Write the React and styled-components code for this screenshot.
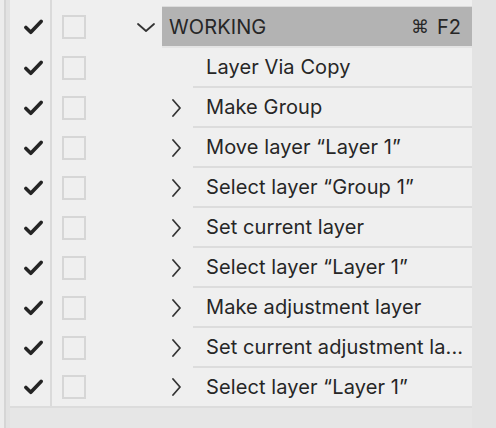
import React from "react";
import styled, { createGlobalStyle } from "styled-components";

const Global = createGlobalStyle`
  html, body { margin: 0; padding: 0; background: #ececec; }
  body { font-family: Inter, "Noto Sans", "DejaVu Sans", sans-serif; }
`;

const Frame = styled.div`
  display: flex;
  width: 496px;
  height: 428px;
  overflow: hidden;
  background: #ececec;
`;

const Rail = styled.div`
  width: 4px;
  margin-left: 4px;
  border-left: 2px solid #d5d5d5;
  background: #e2e2e2;
  flex: none;
`;

const Main = styled.div`
  flex: 1;
  min-width: 0;
  display: flex;
  flex-direction: column;
  background: #efefef;
`;

const Side = styled.div`
  width: 24px;
  flex: none;
  background: #e3e3e3;
`;

const List = styled.div`
  display: flex;
  flex-direction: column;
`;

const Row = styled.div`
  display: flex;
  height: ${(p) => p.$h}px;
  min-width: 0;
`;

const CheckCell = styled.div`
  width: 42px;
  box-sizing: border-box;
  border-right: 2px solid #dadada;
  display: flex;
  align-items: center;
  justify-content: center;
  padding-left: 6px;
  flex: none;
`;

const BoxCell = styled.div`
  width: 34px;
  padding-left: 10px;
  box-sizing: border-box;
  display: flex;
  align-items: center;
  flex: none;
`;

const Box = styled.div`
  width: 24px;
  height: 24px;
  box-sizing: border-box;
  border: 2px solid #d6d6d6;
`;

const ChevCell = styled.div`
  width: ${(p) => p.$w}px;
  flex: none;
  display: flex;
  align-items: center;
  justify-content: flex-end;
  padding-right: ${(p) => p.$pr}px;
  box-sizing: border-box;
`;

const Label = styled.div`
  flex: 1;
  min-width: 0;
  display: flex;
  align-items: center;
  box-sizing: border-box;
  font-size: 20px;
  color: #262626;
  white-space: nowrap;
  padding-left: ${(p) => (p.$header ? 7 : 13)}px;
  padding-right: ${(p) => (p.$header ? 11 : 4)}px;
  background: ${(p) => (p.$header ? "#b3b3b3" : "transparent")};
  border-top: ${(p) => (p.$header ? "1px solid #dcdcdc" : "none")};
  border-bottom: ${(p) =>
    p.$last ? "none" : p.$header ? "2px solid #e4e4e4" : "2px solid #dcdcdc"};
`;

const Text = styled.span`
  flex: 1;
  min-width: 0;
  overflow: hidden;
  letter-spacing: 0.1px;
`;

const Shortcut = styled.span`
  font-size: 20px;
  color: #262626;
  display: flex;
  align-items: center;
  gap: 8px;
`;

const Cmd = styled.span`
  font-family: "DejaVu Sans", sans-serif;
  font-size: 18px;
`;

const Footer = styled.div`
  flex: 1;
  background: #e6e6e6;
  border-top: 2px solid #dcdcdc;
`;

const Spacer = styled.div`
  display: flex;
  height: 6px;
`;

const Check = () => (
  <svg width="19" height="16" viewBox="0 0 19 16">
    <polyline
      points="1.9,8.4 6.8,13.3 17.1,2.4"
      fill="none"
      stroke="#242424"
      strokeWidth="3.6"
      strokeLinecap="round"
      strokeLinejoin="round"
    />
  </svg>
);

const ChevronDown = () => (
  <svg width="18" height="9" viewBox="0 0 18 9">
    <polyline
      points="1,1 9,8 17,1"
      fill="none"
      stroke="#333"
      strokeWidth="1.8"
      strokeLinecap="round"
      strokeLinejoin="round"
    />
  </svg>
);

const ChevronRight = () => (
  <svg width="9" height="18" viewBox="0 0 9 18">
    <polyline
      points="1,1 8,9 1,17"
      fill="none"
      stroke="#333"
      strokeWidth="1.8"
      strokeLinecap="round"
      strokeLinejoin="round"
    />
  </svg>
);

const items = [
  { text: "Layer Via Copy", chev: false },
  { text: "Make Group", chev: true },
  { text: "Move layer \u201cLayer 1\u201d", chev: true },
  { text: "Select layer \u201cGroup 1\u201d", chev: true },
  { text: "Set current layer", chev: true },
  { text: "Select layer \u201cLayer 1\u201d", chev: true },
  { text: "Make adjustment layer", chev: true },
  { text: "Set current adjustment la...", chev: true },
  { text: "Select layer \u201cLayer 1\u201d", chev: true },
];

export default function App() {
  return (
    <>
      <Global />
      <Frame>
        <Rail />
        <Main>
          <List>
            <Spacer>
              <CheckCell />
            </Spacer>
            <Row $h={42}>
              <CheckCell>
                <Check />
              </CheckCell>
              <BoxCell>
                <Box />
              </BoxCell>
              <ChevCell $w={76} $pr={7}>
                <ChevronDown />
              </ChevCell>
              <Label $header>
                <Text>WORKING</Text>
                <Shortcut>
                  <Cmd>⌘</Cmd>F2
                </Shortcut>
              </Label>
            </Row>
            {items.map((it, i) => (
              <Row key={i} $h={i === items.length - 1 ? 38 : 40}>
                <CheckCell>
                  <Check />
                </CheckCell>
                <BoxCell>
                  <Box />
                </BoxCell>
                <ChevCell $w={107} $pr={12}>
                  {it.chev && <ChevronRight />}
                </ChevCell>
                <Label $last={i === items.length - 1}>
                  <Text>{it.text}</Text>
                </Label>
              </Row>
            ))}
          </List>
          <Footer />
        </Main>
        <Side />
      </Frame>
    </>
  );
}
